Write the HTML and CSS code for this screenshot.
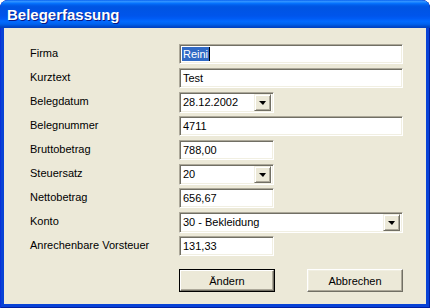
FILE: index.html
```html
<!DOCTYPE html>
<html lang="de">
<head>
<meta charset="utf-8">
<title>Belegerfassung</title>
<link rel="stylesheet" href="styles.css">
</head>
<body>
<div class="window">
  <div class="titlebar"><span class="title">Belegerfassung</span></div>
  <div class="client">
    <div class="form">
      <label class="lbl">Firma</label>
      <div class="field wide"><span class="sel">Reini</span><span class="caret"></span></div>

      <label class="lbl">Kurztext</label>
      <div class="field wide">Test</div>

      <label class="lbl">Belegdatum</label>
      <div class="field combo short"><span class="ctext">28.12.2002</span><span class="dd"><span class="arrow"></span></span></div>

      <label class="lbl">Belegnummer</label>
      <div class="field wide">4711</div>

      <label class="lbl">Bruttobetrag</label>
      <div class="field short">788,00</div>

      <label class="lbl">Steuersatz</label>
      <div class="field combo short"><span class="ctext">20</span><span class="dd"><span class="arrow"></span></span></div>

      <label class="lbl">Nettobetrag</label>
      <div class="field short">656,67</div>

      <label class="lbl">Konto</label>
      <div class="field combo wide"><span class="ctext">30 - Bekleidung</span><span class="dd"><span class="arrow"></span></span></div>

      <label class="lbl">Anrechenbare Vorsteuer</label>
      <div class="field short">131,33</div>

      <div class="buttons">
        <button class="btn default"><span class="btn-inner">Ändern</span></button>
        <button class="btn"><span class="btn-inner">Abbrechen</span></button>
      </div>
    </div>
  </div>
</div>
</body>
</html>
```

FILE: styles.css
```css
html, body {
  margin: 0;
  padding: 0;
  background: #ffffff;
}

.window {
  width: 430px;
  height: 308px;
  box-sizing: border-box;
  display: flex;
  flex-direction: column;
  padding: 0 4px 4px 4px;
  background: #0842D6;
  border-radius: 8px 8px 0 0;
  box-shadow: inset 1px 0 #0831D9, inset -1px 0 #001EA0, inset 0 -1px #001EA0;
  overflow: hidden;
}

.titlebar {
  height: 28px;
  margin: 0 -4px;
  padding: 1px 0 0 7px;
  box-sizing: border-box;
  display: flex;
  align-items: center;
  border-radius: 8px 8px 0 0;
  background: linear-gradient(to bottom,
    #0058EE 0%, #3593FF 4%, #288EFF 7%, #127DFF 10%, #036FFC 13%,
    #0262EE 17%, #0057E5 22%, #0054E3 28%, #0055EB 56%, #005BF5 66%,
    #026AFE 76%, #0062EF 86%, #0052D6 92%, #0046C8 96%, #0040BE 100%);
}

.title {
  font-family: "Liberation Sans", Arial, sans-serif;
  font-weight: bold;
  font-size: 15px;
  color: #ffffff;
  text-shadow: 1px 1px 0 #0A1883;
}

.client {
  flex: 1;
  background: #ECE9D8;
  padding: 16px 0 0 26px;
  font-family: "Liberation Sans", Arial, sans-serif;
  font-size: 11px;
  color: #000;
}

.form {
  display: grid;
  grid-template-columns: 149px 224px;
  grid-auto-rows: 20px;
  row-gap: 4px;
  align-items: center;
}

.lbl {
  line-height: 20px;
  margin-top: -2px;
  white-space: nowrap;
}

.field {
  box-sizing: border-box;
  height: 20px;
  background: #ffffff;
  border: 1px solid;
  border-color: #ACA899 #ffffff #ffffff #ACA899;
  box-shadow: inset 1px 1px 0 #716F64, inset -1px -1px 0 #F1EFE2;
  padding: 0 0 0 3px;
  display: flex;
  align-items: center;
  line-height: 14px;
  white-space: nowrap;
}

.wide { width: 224px; }
.short { width: 95px; }

.sel {
  background: #316AC5;
  color: #ffffff;
  padding: 0 1px 0 0;
  margin-left: -1px;
  padding-left: 1px;
}

.caret {
  display: inline-block;
  width: 1px;
  height: 14px;
  background: #000;
}

.combo {
  height: 21px;
  padding-right: 2px;
  justify-content: space-between;
}

.ctext { flex: 1; }

.dd {
  box-sizing: border-box;
  width: 17px;
  height: 17px;
  background: #ECE9D8;
  border: 1px solid;
  border-color: #F1EFE2 #716F64 #716F64 #F1EFE2;
  box-shadow: inset 1px 1px 0 #ffffff, inset -1px -1px 0 #ACA899;
  display: flex;
  align-items: center;
  justify-content: center;
}

.arrow {
  width: 0;
  height: 0;
  border-left: 4px solid transparent;
  border-right: 3px solid transparent;
  border-top: 4px solid #000;
  margin-top: 1px;
}

.buttons {
  grid-column: 2;
  grid-row: 10;
  align-self: start;
  margin-top: 9px;
  display: flex;
  justify-content: space-between;
  width: 224px;
}

.btn {
  box-sizing: border-box;
  width: 96px;
  height: 23px;
  padding: 0;
  margin: 0;
  background: #ECE9D8;
  border: 1px solid;
  border-color: #ffffff #716F64 #716F64 #ffffff;
  box-shadow: inset -1px -1px 0 #ACA899, inset 1px 1px 0 #F1EFE2;
  font-family: "Liberation Sans", Arial, sans-serif;
  font-size: 11px;
  color: #000;
  display: flex;
  align-items: center;
  justify-content: center;
}

.btn.default {
  border: 1px solid #000;
  box-shadow: none;
}

.btn.default .btn-inner {
  box-sizing: border-box;
  width: 100%;
  height: 100%;
  display: flex;
  align-items: center;
  justify-content: center;
  border: 1px solid;
  border-color: #ffffff #716F64 #716F64 #ffffff;
  box-shadow: inset -1px -1px 0 #ACA899;
}
```
